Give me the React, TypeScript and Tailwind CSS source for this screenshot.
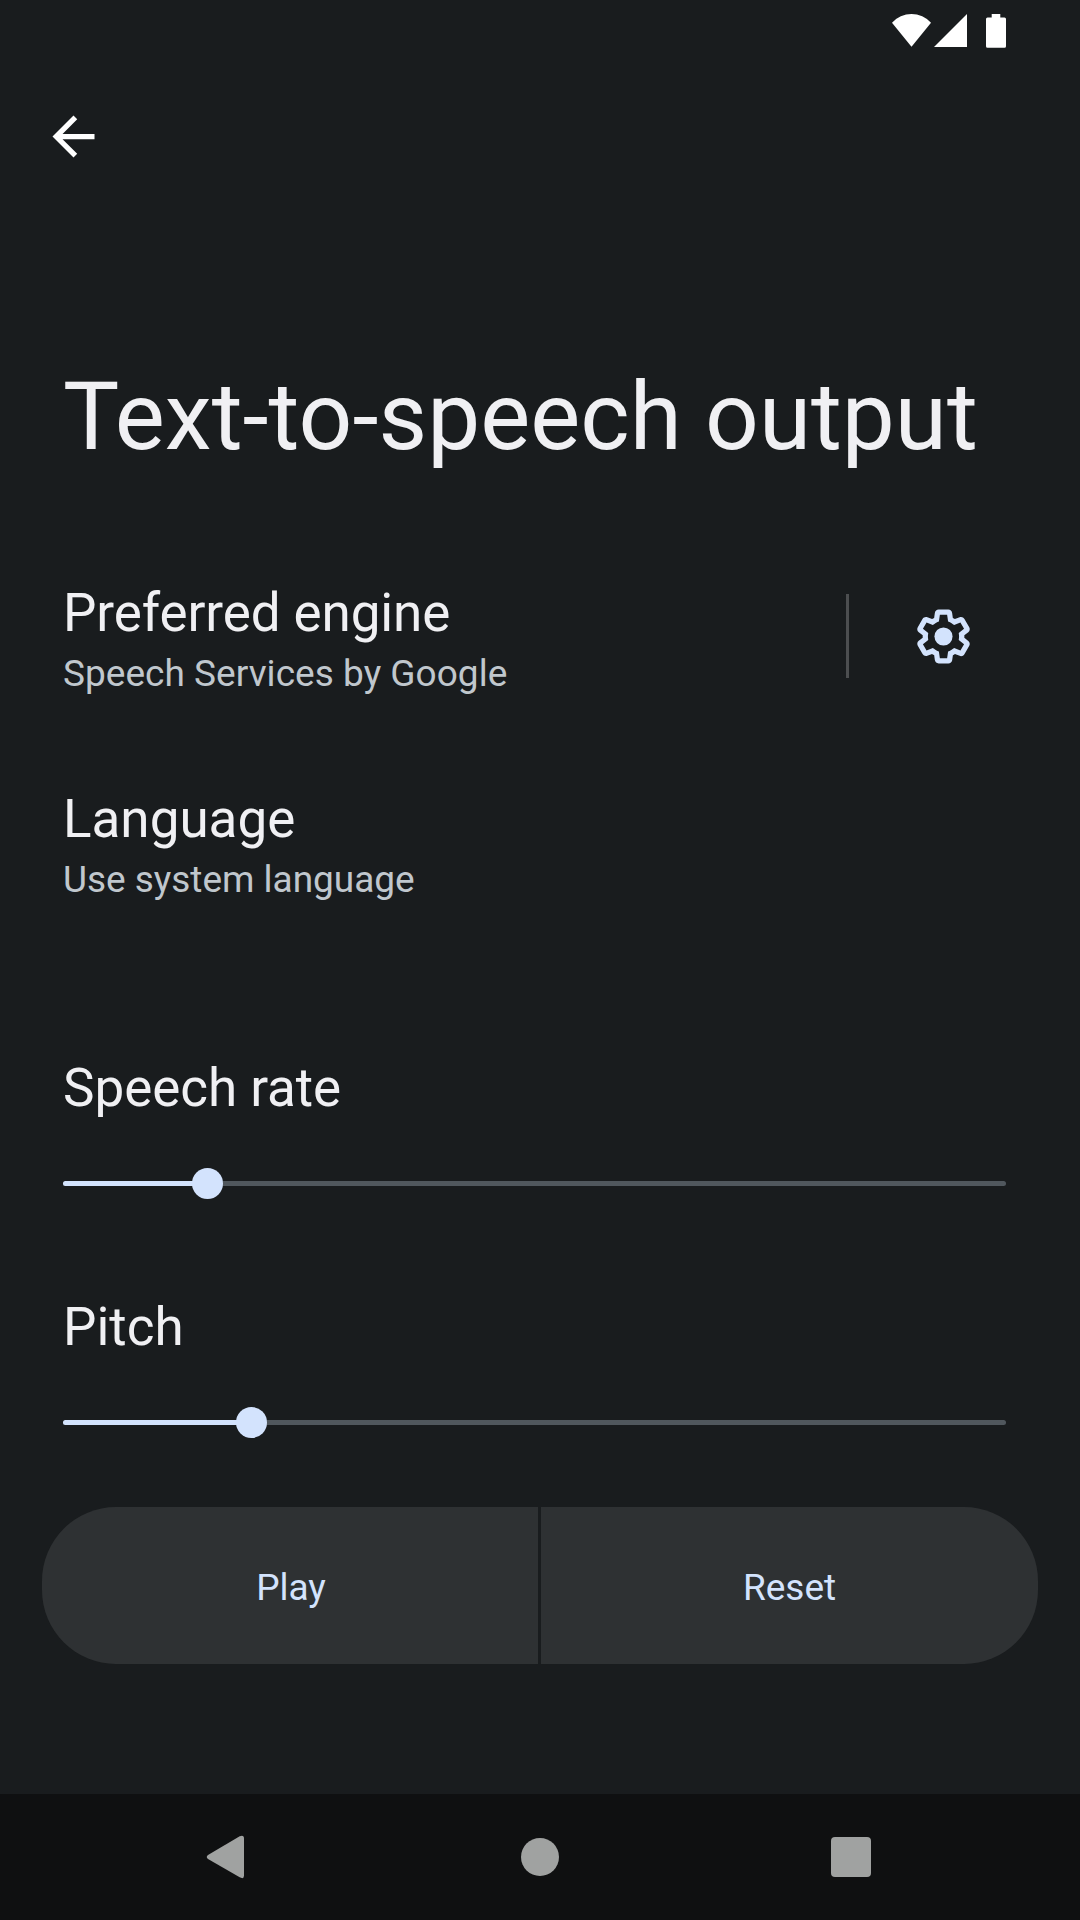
import React from "react";

function Slider({ fill }: { fill: number }) {
  return (
    <div className="relative ml-[63px] h-[32px] w-[943px]">
      <div className="absolute inset-x-0 top-[13px] h-[5px] rounded-full bg-[#50575d]" />
      <div className="absolute left-0 top-[13px] h-[5px] rounded-full bg-[#d3e3fd]" style={{ width: fill }} />
      <div className="absolute top-0 size-[31px] rounded-full bg-[#d3e3fd]" style={{ left: fill - 15 }} />
    </div>
  );
}

function GearIcon() {
  return (
    <svg className="ml-[63px] mt-[34px]" width="63" height="63" viewBox="0 0 24 24" fill="#d3e3fd">
      <path
        fillRule="evenodd"
        d="M13.85 22.25h-3.7c-.74 0-1.36-.54-1.45-1.27l-.27-1.89c-.27-.14-.53-.29-.79-.46l-1.8.72c-.7.26-1.47-.03-1.81-.65L2.2 15.53c-.35-.66-.2-1.44.36-1.88l1.53-1.19c-.01-.15-.02-.3-.02-.46 0-.15.01-.31.02-.46l-1.52-1.19c-.59-.45-.74-1.26-.37-1.88l1.85-3.19c.34-.62 1.11-.9 1.79-.63l1.81.73c.26-.17.52-.32.78-.46l.27-1.91c.09-.7.71-1.25 1.44-1.25h3.7c.74 0 1.36.54 1.45 1.27l.27 1.89c.27.14.53.29.79.46l1.8-.72c.71-.26 1.48.03 1.82.65l1.84 3.18c.36.66.2 1.44-.36 1.88l-1.52 1.19c.01.15.02.3.02.46s-.01.31-.02.46l1.52 1.19c.56.45.72 1.23.37 1.86l-1.86 3.22c-.34.62-1.11.9-1.8.63l-1.8-.72c-.26.17-.52.32-.78.46l-.27 1.91c-.1.68-.72 1.22-1.46 1.22zM10.62 20.25h2.76l.37-2.55.53-.22c.44-.18.88-.44 1.34-.78l.45-.34 2.38.96 1.38-2.4-2.03-1.58.07-.56c.03-.26.06-.51.06-.78s-.03-.53-.06-.78l-.07-.56 2.03-1.58-1.39-2.4-2.39.96-.45-.35c-.42-.32-.87-.58-1.33-.77l-.52-.22-.37-2.55h-2.76l-.37 2.55-.53.21c-.44.19-.88.44-1.34.79l-.45.33-2.38-.95-1.39 2.39 2.03 1.58-.07.56c-.03.26-.06.52-.06.79s.02.53.06.78l.07.56-2.03 1.58 1.38 2.4 2.39-.96.45.35c.43.33.86.58 1.33.77l.53.22z"
      />
      <circle cx="12" cy="12" r="3.45" />
    </svg>
  );
}

export default function App() {
  return (
    <div className="flex h-[1920px] w-[1080px] flex-col overflow-hidden bg-[#191c1e] font-[Roboto,sans-serif] text-[#f0f0f3]">
      <header className="flex h-[63px] justify-end pr-[73px]">
        <svg width="116" height="63" viewBox="891 0 116 63" fill="#fff">
          <path d="M892 22.8A26.2 26.2 0 0 1 931 22.8L911.5 46.8Z" />
          <path d="M967 14V47H934Z" />
          <path d="M991.7 14h8.6v3.4h4.2q1.5 0 1.5 1.5v27.3q0 1.5-1.5 1.5h-17q-1.5 0-1.5-1.5V18.9q0-1.5 1.5-1.5h4.2z" />
        </svg>
      </header>
      <div className="h-[297px] pl-[42px] pt-[42px]">
        <svg width="63" height="63" viewBox="0 0 24 24" fill="#fff">
          <path d="M20 11H7.83l5.59-5.59L12 4l-8 8 8 8 1.41-1.41L7.83 13H20z" />
        </svg>
      </div>
      <h1 className="h-[211px] pl-[63px] text-[94.4px] leading-[114px]">Text-to-speech output</h1>
      <section className="flex h-[206px] pl-[63px]">
        <div className="w-[783px] pt-[10px]">
          <h2 className="text-[53px] leading-[64px] tracking-[-0.1px]">Preferred engine</h2>
          <p className="mt-[4px] text-[37px] leading-[50px] tracking-[0.03px] text-[#c0c7cd]">Speech Services by Google</p>
        </div>
        <div className="mt-[23px] h-[84px] w-[3px] bg-[#4c4e50]" />
        <GearIcon />
      </section>
      <section className="h-[269px] pl-[63px] pt-[10px]">
        <h2 className="text-[53px] leading-[64px]">Language</h2>
        <p className="mt-[4px] text-[37px] leading-[50px] tracking-[-0.03px] text-[#c0c7cd]">Use system language</p>
      </section>
      <section className="h-[239px] pt-[10px]">
        <h2 className="mb-[48px] pl-[63px] text-[53px] leading-[64px] tracking-[-0.05px]">Speech rate</h2>
        <Slider fill={144} />
      </section>
      <section className="h-[222px] pt-[10px]">
        <h2 className="mb-[48px] pl-[63px] text-[53px] leading-[64px]">Pitch</h2>
        <Slider fill={188} />
      </section>
      <div className="mx-[42px] flex h-[157px] gap-[3px] text-[37px] text-[#d3e3fd]">
        <button className="w-[496px] rounded-l-[74px] bg-[#2e3133] pl-[2px] pt-[4px]">Play</button>
        <button className="w-[497px] rounded-r-[74px] bg-[#2e3133] pt-[4px]">Reset</button>
      </div>
      <nav className="mt-auto flex h-[126px] items-center bg-[#0f1011]">
        <svg className="ml-[206px]" width="39" height="44" viewBox="206 1835 39 44" fill="#a0a2a1">
          <path d="M239.7 1836.2Q244 1834.4 244 1838.5V1875.5Q244 1879.6 239.7 1877.3L208 1859Q205.5 1857 208 1855Z" />
        </svg>
        <div className="ml-[276px] size-[38px] rounded-full bg-[#a0a2a1]" />
        <div className="ml-[272px] size-[40px] rounded-[4px] bg-[#a0a2a1]" />
      </nav>
    </div>
  );
}
